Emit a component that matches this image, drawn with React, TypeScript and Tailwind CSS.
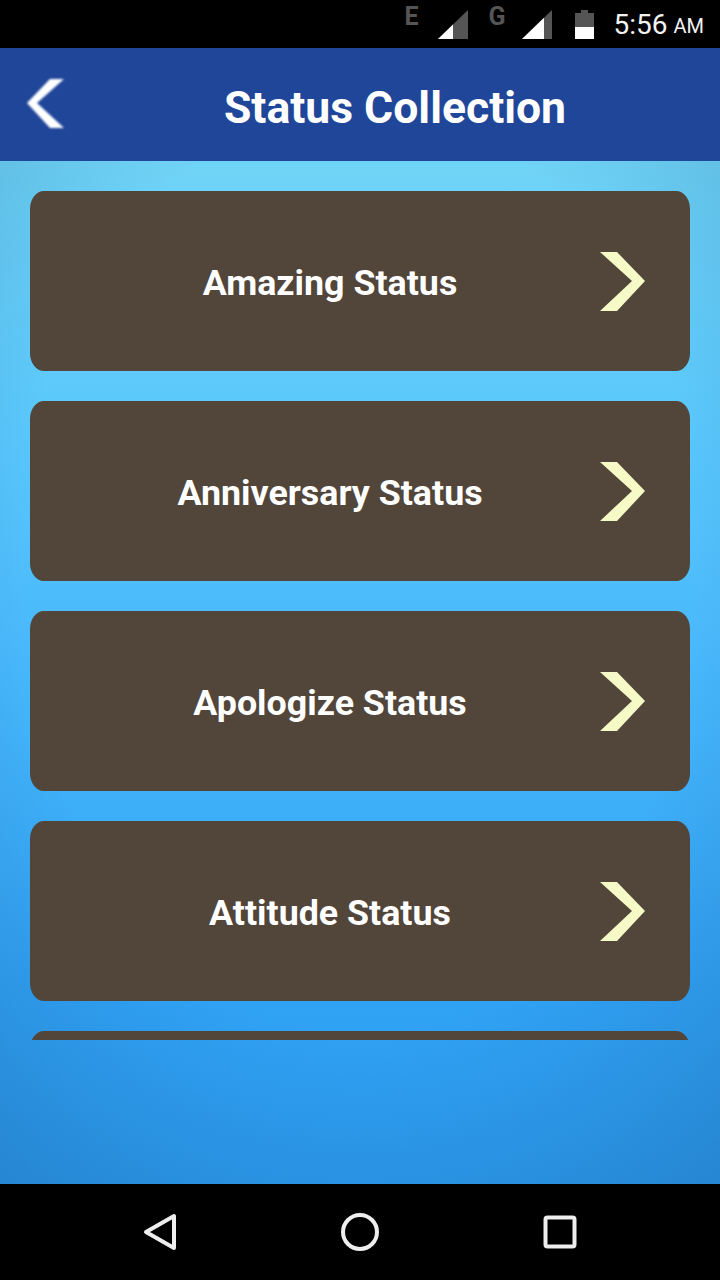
const items = ["Amazing Status", "Anniversary Status", "Apologize Status", "Attitude Status", ""];

function Signal({ fillTo }: { fillTo: number }) {
  return (
    <svg width="30" height="30" viewBox="0 0 30 30">
      <polygon points="0,29 30,0 30,29" fill="#555555" />
      <polygon points={`0,29 ${fillTo},${29 - fillTo * (29 / 30)} ${fillTo},29`} fill="#ffffff" />
    </svg>
  );
}

function StatusBar() {
  return (
    <div className="h-12 bg-black flex items-start shrink-0 relative">
      <div className="ml-auto flex items-start pt-[10px] pr-4">
        <span className="text-[25px] leading-[16px] font-bold text-[#555555] mr-[17px] -mt-[1px] w-[17px]">E</span>
        <Signal fillTo={15} />
        <span className="text-[25px] leading-[16px] font-bold text-[#555555] ml-[20px] mr-[16px] -mt-[1px] w-[18px]">G</span>
        <Signal fillTo={22} />
        <svg width="20" height="30" viewBox="0 0 20 30" className="ml-[23px]">
          <path d="M0 3H6V0H13V3H19V29H0Z" fill="#555555" />
          <rect x="0" y="17" width="19" height="12" fill="#ffffff" />
        </svg>
        <span className="text-[28px] leading-[30px] text-[#f2f2f2] ml-[18px] w-[53px]">5:56</span>
        <span className="text-[20px] leading-[30px] text-[#f2f2f2] ml-[7px] mt-[1px]">AM</span>
      </div>
    </div>
  );
}

function Header() {
  return (
    <div className="h-[113px] bg-[#204699] flex items-center shrink-0 relative">
      <svg width="40" height="52" viewBox="0 0 40 52" className="absolute left-[25px] top-[30px] blur-[1px]">
        <polygon points="25,1 39,1 12,25 39,50 25,50 2,25" fill="#ffffff" />
      </svg>
      <h1 className="w-full text-center text-[44.5px] leading-none font-bold text-white pl-[70px] mt-[8px]">Status Collection</h1>
    </div>
  );
}

function Card({ label }: { label: string }) {
  return (
    <div className="h-[180px] shrink-0 rounded-[14px/18px] bg-[#52453a] flex items-center relative">
      <span className="w-full text-center text-[35.8px] leading-none font-bold text-white pr-[60px] mt-[6px]">{label}</span>
      <svg width="46" height="60" viewBox="0 0 46 60" className="absolute left-[570px] top-[60px]">
        <polygon points="0,1 17,1 45,30 17,60 0,60 32,30" fill="#f5fac6" />
      </svg>
    </div>
  );
}

function NavBar() {
  return (
    <div className="h-24 bg-black shrink-0 relative flex items-center justify-center">
      <svg width="720" height="96" viewBox="0 0 720 96" fill="none" stroke="#eeeeee" strokeWidth="4" strokeLinejoin="round">
        <polygon points="146,48 174,32 174,64" />
        <circle cx="360" cy="48" r="17" />
        <rect x="545.5" y="33.5" width="29" height="29" rx="2" />
      </svg>
    </div>
  );
}

export default function App() {
  return (
    <div
      className="w-[720px] h-[1280px] flex flex-col overflow-hidden"
      style={{ fontFamily: "Roboto, sans-serif" }}
    >
      <StatusBar />
      <Header />
      <div className="flex-1 relative bg-[linear-gradient(180deg,#70d4f6_0%,#5fcbfb_20%,#47b7fb_50%,#31a3f5_80%,#2c9cee_100%)]">
        <div className="absolute inset-0 bg-[radial-gradient(ellipse_78%_75%_at_50%_40%,rgba(0,0,0,0)_60%,rgba(20,70,130,0.24)_100%)]" />
        <div className="relative h-[879px] pt-[30px] px-[30px] overflow-hidden flex flex-col gap-[30px]">
          {items.map((label, i) => (
            <Card key={i} label={label} />
          ))}
        </div>
      </div>
      <NavBar />
    </div>
  );
}
